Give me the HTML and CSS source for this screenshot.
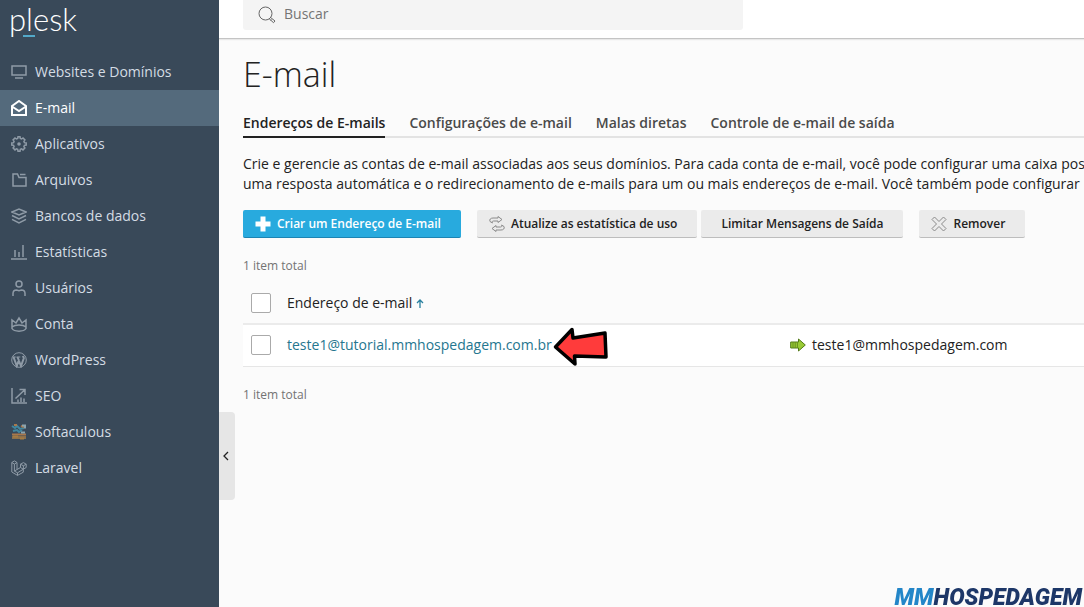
FILE: index.html
```html
<!DOCTYPE html>
<html lang="pt-BR">
<head>
<meta charset="utf-8">
<meta name="viewport" content="width=device-width, initial-scale=1">
<title>E-mail - Plesk</title>
<link rel="stylesheet" href="styles.css">
</head>
<body>
<div class="app">
  <aside class="sidebar">
    <a class="logo" href="#">p<span class="logo-mark">l</span>esk</a>
    <nav class="menu">
      <a class="menu-item" href="#"><svg class="icon" viewBox="0 0 16 16"><path d="M1 2h14v9H1zM4 14h8" /></svg>Websites e Domínios</a>
      <a class="menu-item active" href="#"><svg class="icon" viewBox="0 0 16 16"><path d="M1 6 8 1l7 5v9H1zM1 6.500l7 4.500 7-4.500" /></svg>E-mail</a>
      <a class="menu-item" href="#"><svg class="icon" viewBox="0 0 16 16"><path d="M6.700 2.500 7 .8h2l.3 1.700 1.300.5 1.400-1 1.900 1.900-1 1.400.5 1.400 1.800.3v2l-1.800.3-.5 1.300 1 1.400-1.900 1.900-1.400-1-1.300.5-.3 1.800H7l-.3-1.800-1.300-.5-1.400 1L2.100 12l1-1.400-.5-1.300L.8 9V7l1.800-.3.5-1.400-1-1.400L4 2l1.400 1z"/><circle class="fill" cx="8" cy="8" r="1.800"/></svg>Aplicativos</a>
      <a class="menu-item" href="#"><svg class="icon" viewBox="0 0 16 16"><path d="M2 2h4.500L8 5.500h7V14H2zM9 2.500h5.500" /></svg>Arquivos</a>
      <a class="menu-item" href="#"><svg class="icon" viewBox="0 0 16 16"><path d="m1 4 7-3 7 3-7 3zM1 7.500l7 3.500 7-3.500M1 11.300 8 15l7-3.700" /></svg>Bancos de dados</a>
      <a class="menu-item" href="#"><svg class="icon" viewBox="0 0 16 16"><path d="M0 15h16M4 13V6M8 13V8M12 13V1" /></svg>Estatísticas</a>
      <a class="menu-item" href="#"><svg class="icon" viewBox="0 0 16 16"><circle cx="8" cy="4" r="3"/><path d="M2 16v-2.500C2 11 3.500 10 5.500 10L8 10.800l2.500-.8c2 0 3.500 1 3.500 3.500V16" /></svg>Usuários</a>
      <a class="menu-item" href="#"><svg class="icon" viewBox="0 0 16 16"><path d="M1 12.500V4l4 3 3-5 3 5 4-3v8.500C13 16 3 16 1 12.500zM1 11c3-2.600 11-2.600 14 0" /></svg>Conta</a>
      <a class="menu-item" href="#"><svg class="icon thin" viewBox="0 0 16 16"><circle cx="8" cy="8" r="7.300"/><path class="bold" d="m2.500 5 3.300 9L8 7.500M6.500 5l3.500 9 2.700-7.500c.3-1-.4-1.500-1-2.500"/><path d="M2 5h2.800M5.500 5h3.800"/></svg>WordPress</a>
      <a class="menu-item" href="#"><svg class="icon" viewBox="0 0 16 16"><path d="M1 0v15h15M4.500 10.500l9-8.500M8.500 1.500H14V7M7 14v-2.500M10 14V9.500M13 14v-3.500" /></svg>SEO</a>
      <a class="menu-item" href="#"><svg class="icon soft" viewBox="0 0 16 16"><path stroke="#4187a0" d="m1 2 3 2 2-2 3 3 4-1M2 7l4-1 2 2 3-2"/><path stroke="#a9794c" d="M3 1h3M10 2l3 1M1 10.500h14"/><path stroke="#8ba4ae" d="M11 1.500h3v3M10 8.500h4"/><path stroke="#8c714c" stroke-width="3" d="M1 13.500h14"/><path stroke="#a67c42" d="M2 12.500h5M9 14.500h4"/></svg>Softaculous</a>
      <a class="menu-item" href="#"><svg class="icon thin" viewBox="0 0 16 16"><path d="m.8 2.500 2.600-1.600L6 2.500v7l3.500-2V4.200L12.400 2.600l2.800 1.600v3.300l-2.900 1.700v3L6.500 15.400.8 12zM.8 2.500l2.600 1.600L6 2.500M3.400 4.100v7l3.100 1.700 5.800-3.600-2.800-1.700M9.500 4.200l2.900 1.600 2.800-1.600M12.400 5.800v3.400M6.500 12.800v2.600M6 9.500l-2.600 1.600"/></svg>Laravel</a>
    </nav>
    <button class="collapse" type="button" aria-label="Recolher menu"><svg viewBox="0 0 6 10"><path d="M5 1 1 5l4 4"/></svg></button>
  </aside>

  <div class="page">
    <header class="topbar">
      <label class="search">
        <svg viewBox="0 0 18 18"><circle cx="7.500" cy="7.500" r="6.500"/><path d="m12 11 5 4-1.500 1.700L11 12.500M13.700 13.500l-1 1"/></svg>
        <input type="search" placeholder="Buscar" aria-label="Buscar">
      </label>
    </header>

    <main class="content">
      <h1>E-mail</h1>
      <nav class="tabs">
        <a class="tab current" href="#">Endereços de E-mails</a>
        <a class="tab" href="#">Configurações de e-mail</a>
        <a class="tab" href="#">Malas diretas</a>
        <a class="tab" href="#">Controle de e-mail de saída</a>
      </nav>
      <p class="intro">Crie e gerencie as contas de e-mail associadas aos seus domínios. Para cada conta de e-mail, você pode configurar uma caixa pos<br>uma resposta automática e o redirecionamento de e-mails para um ou mais endereços de e-mail. Você também pode configurar</p>

      <div class="toolbar">
        <button class="btn primary" type="button"><svg viewBox="0 0 16 16"><path d="M5.500.5h5v5h5v5h-5v5h-5v-5h-5v-5h5z"/></svg>Criar um Endereço de E-mail</button>
        <div class="btn-group">
          <button class="btn" type="button"><svg viewBox="0 0 16 16"><path d="M1 5.500c-.8-2 .5-3.500 3-3.500h5V.5l4 3-4 3V5H4.500C3 5 3 6 3.500 7zM15 10.500c.8 2-.5 3.500-3 3.500H7v1.500l-4-3 4-3V11h4.500c1.500 0 1.500-1 1-2z"/></svg>Atualize as estatística de uso</button>
          <button class="btn" type="button">Limitar Mensagens de Saída</button>
        </div>
        <button class="btn" type="button"><svg viewBox="0 0 16 16"><path d="m3.500 1 4.500 4.500L12.500 1 15 3.500 10.500 8l4.500 4.500-2.500 2.500L8 10.500 3.500 15 1 12.500 5.500 8 1 3.500z" stroke-linejoin="round"/></svg>Remover</button>
      </div>

      <p class="total">1 item total</p>
      <table class="list">
        <thead>
          <tr>
            <th class="check"><input type="checkbox" aria-label="Selecionar todos"></th>
            <th class="address"><a class="sort" href="#">Endereço de e-mail <svg viewBox="0 0 8 9"><path d="M4 9V1M1 4l3-3 3 3"/></svg></a></th>
            <th></th>
          </tr>
        </thead>
        <tbody>
          <tr>
            <td class="check"><input type="checkbox" aria-label="Selecionar teste1@tutorial.mmhospedagem.com.br"></td>
            <td class="address">
              <span class="marked"><a class="link" href="#">teste1@tutorial.mmhospedagem.com.br</a><svg class="pointer" viewBox="0 0 56 40"><path d="M3.500 21 20 3.500l1 8.500 32-5 1 24-31.500-1 .5 8z"/></svg></span>
            </td>
            <td><span class="forward"><svg viewBox="0 0 16 14"><path d="M.7 4h7.800V1l6.800 6-6.800 6v-3H.7z"/><path class="bars" d="M3 4v6M5.200 4v6M7.400 4v6"/></svg>teste1@mmhospedagem.com</span></td>
          </tr>
        </tbody>
      </table>
      <p class="total">1 item total</p>
    </main>
  </div>
</div>
<div class="brand"><span>MM</span>HOSPEDAGEM</div>
</body>
</html>
```
FILE: styles.css
```css
* { box-sizing: border-box; }

body {
  margin: 0;
  overflow: hidden;
  background: #fbfbfb;
  color: #222;
  font: 14px/20px "Open Sans", sans-serif;
}

a { color: inherit; text-decoration: none; }
svg { flex: none; fill: none; }
h1, p { margin: 0; }

.app { display: flex; min-height: 100vh; }

/* Sidebar */
.sidebar {
  position: relative;
  flex: none;
  width: 219px;
  background: #394959;
  color: #d4dce4;
}

.logo {
  display: block;
  height: 54px;
  padding-left: 9px;
  color: #fff;
  font: 300 31px/38px Lato, sans-serif;
}

.logo-mark { position: relative; }

.logo-mark::after {
  content: "";
  position: absolute;
  left: -3px;
  bottom: 1px;
  width: 12px;
  height: 2px;
  background: #53a9c9;
}

.menu-item {
  display: flex;
  align-items: center;
  gap: 8px;
  height: 36px;
  padding-left: 11px;
}

.menu-item.active { background: #546a7c; color: #fff; }

.icon {
  width: 16px;
  height: 16px;
  stroke: #8f9ba7;
  stroke-width: 1.500;
}

.icon.thin { stroke-width: 1; }
.icon .bold { stroke-width: 2; }
.icon .fill { fill: #8f9ba7; stroke: none; }
.icon.soft { stroke-width: 2; }
.active .icon { stroke: #fff; stroke-width: 2; }

.collapse {
  position: absolute;
  left: 100%;
  top: 412px;
  width: 16px;
  height: 88px;
  padding: 0 6px 0 4px;
  border: 0;
  border-radius: 0 4px 4px 0;
  background: #e6e6e6;
}

.collapse svg { display: block; width: 6px; height: 10px; stroke: #222; stroke-width: 1.300; }

/* Page */
.page { flex: 1; min-width: 0; }

.topbar {
  height: 39px;
  padding-left: 24px;
  border-bottom: 1px solid #c4c4c4;
  background: #fff;
  box-shadow: 0 1px 1px #e8e8e8;
}

.search {
  display: flex;
  align-items: center;
  gap: 8px;
  max-width: 500px;
  height: 30px;
  padding: 0 15px;
  border-radius: 0 0 3px 3px;
  background: #f4f4f4;
}

.search svg { width: 18px; height: 18px; stroke: #666; }

.search input {
  flex: 1;
  padding: 0 0 2px;
  border: 0;
  background: none;
  font: inherit;
}

.search input::placeholder { color: #757575; opacity: 1; }

.content { padding-left: 24px; }

h1 {
  padding-top: 12px;
  font-size: 34px;
  font-weight: 300;
  line-height: 46px;
}

.tabs {
  display: flex;
  gap: 24px;
  margin-top: 12px;
  box-shadow: inset 0 -2px #e3e3e3;
  color: #4a4a4a;
  font-weight: 600;
}

.tab { padding: 4px 0 3px; border-bottom: 2px solid transparent; white-space: nowrap; }
.tab.current { border-color: #222; color: #222; }

.intro {
  margin-top: 16px;
  overflow: hidden;
  white-space: nowrap;
}

.toolbar { display: flex; gap: 16px; margin-top: 16px; }
.btn-group { display: flex; gap: 4px; }

.btn {
  display: flex;
  align-items: center;
  gap: 6px;
  height: 28px;
  padding: 0 20px;
  border: 0;
  border-bottom: 1px solid #bdbdbd;
  border-radius: 2px;
  background: #ebebeb;
  color: #222;
  font: 600 12px/18px "Open Sans", sans-serif;
  white-space: nowrap;
}

.btn:has(svg) { padding-left: 12px; }
.btn svg { width: 16px; height: 16px; stroke: #8a8a8a; }
.btn.primary { border-color: #1c84b3; background: #28aade; color: #fff; }
.btn.primary svg { fill: #fff; stroke: none; }

.total {
  margin-top: 18px;
  color: #737373;
  font-size: 12px;
}

/* Address list */
.list {
  width: 100%;
  margin-top: 6px;
  border-collapse: collapse;
  table-layout: fixed;
}

.list th, .list td { height: 42px; padding: 0; text-align: left; font-weight: 400; }
.list th { padding-top: 1px; }
.list thead tr { border-bottom: 2px solid #ebebeb; }
.list tbody tr { border-bottom: 1px solid #e6e6e6; background: #fff; }
.list .check { width: 44px; padding-left: 8px; }
.list .address { width: 503px; }

.check input {
  display: block;
  appearance: none;
  width: 20px;
  height: 20px;
  margin: 0;
  border: 1px solid #aaa;
  border-radius: 2px;
  background: #fff;
}

.sort svg { width: 8px; height: 9px; stroke: #28809f; stroke-width: 1.300; }
.link { color: #25768f; }
.marked { position: relative; }

.pointer {
  position: absolute;
  left: 100%;
  top: -9px;
  width: 56px;
  height: 40px;
  fill: #ff3b3b;
  stroke: #000;
  stroke-width: 3.500;
  stroke-linejoin: round;
}

.forward { display: flex; align-items: center; gap: 6px; }
.forward svg { width: 16px; height: 14px; fill: #9acb35; stroke: #527a18; }
.forward .bars { stroke: #678f22; }

.brand {
  position: fixed;
  right: 2px;
  bottom: 0;
  color: #1d3768;
  font: italic 900 23px/18px Roboto, sans-serif;
}

.brand span { color: #2386c8; }
```
